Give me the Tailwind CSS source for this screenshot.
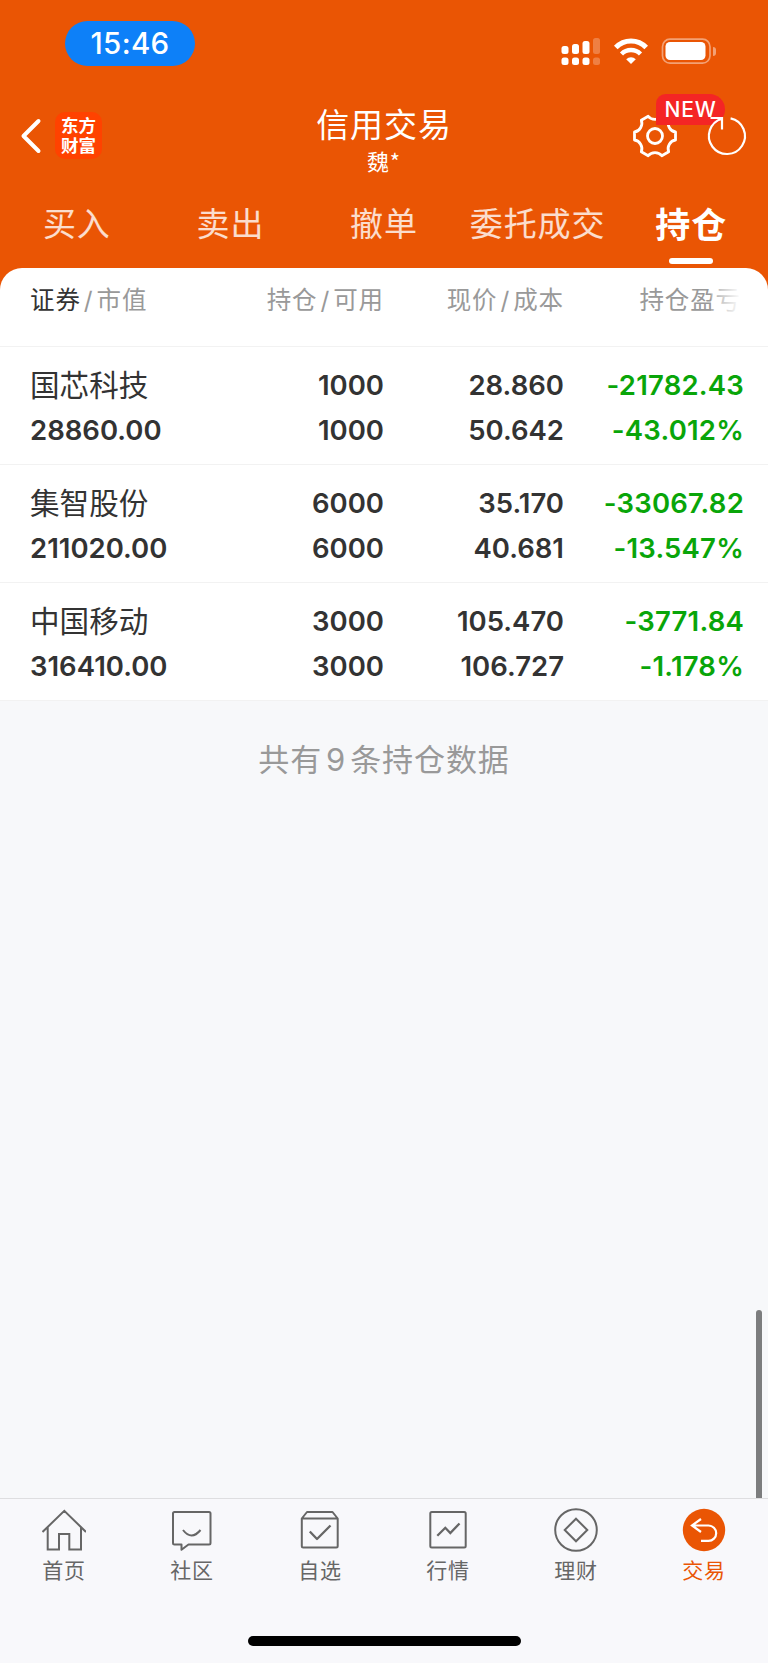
<!DOCTYPE html>
<html lang="zh-CN">
<head>
    <meta charset="UTF-8">
    <title>信用交易</title>
    <script src="https://cdn.jsdelivr.net/npm/@tailwindcss/browser@4"></script>
</head>
<body class="bg-[#f7f8fa] font-['Inter','Noto_Sans_CJK_SC',sans-serif] text-[#333]">
<div class="relative w-[768px] h-[1663px] flex flex-col overflow-hidden">

    <!-- Header -->
    <header class="bg-[#ea5504] h-[292px] shrink-0 text-white">
        <!-- Status bar -->
        <div class="h-[93px] pt-[21px] pl-[65px] pr-[51px] flex justify-between items-start">
            <div class="w-[130px] h-[45px] rounded-full bg-[#0d80f8] flex items-center justify-center pt-px text-[29.500px] font-medium tracking-[0.3px] leading-none">15:46</div>
            <svg class="mt-[15px] mr-[5px]" width="156" height="32" viewBox="0 0 156 32" fill="#fff">
                <rect x="5.5" y="10" width="7" height="8" rx="2.5"/>
                <rect x="16" y="8" width="7" height="10" rx="2.5"/>
                <rect x="26.5" y="5" width="7" height="13" rx="2.5"/>
                <rect x="37" y="2" width="7" height="16" rx="2.5" opacity=".25"/>
                <rect x="5.5" y="21.5" width="7" height="7.5" rx="2.5"/>
                <rect x="16" y="21.5" width="7" height="7.5" rx="2.5"/>
                <rect x="26.5" y="21.5" width="7" height="7.5" rx="2.5"/>
                <rect x="37" y="21.5" width="7" height="7.5" rx="2.5" opacity=".25"/>
                <path d="M59.800 11.500a21 21 0 0 1 30.400 0" fill="none" stroke="#fff" stroke-width="5"/>
                <path d="M65.500 18a13.500 13.500 0 0 1 19 0" fill="none" stroke="#fff" stroke-width="4.5"/>
                <path d="M75 28l-4.800-4.800a7 7 0 0 1 9.600 0z"/>
                <rect x="106.500" y="3.200" width="47.500" height="24" rx="7.5" fill="none" stroke="#fff" stroke-width="1.7" opacity=".45"/>
                <rect x="109.500" y="6" width="40" height="18" rx="4.5"/>
            </svg>
            <div class="absolute left-[713px] top-[47px] w-[3px] h-[9px] rounded-r-full bg-white/45"></div>
        </div>

        <!-- Title row -->
        <div class="relative h-[87px] flex justify-between">
            <div class="flex pt-[19px] pl-[20px]">
                <svg class="mt-[6px]" width="22" height="36" viewBox="0 0 22 36" fill="none" stroke="#fff" stroke-width="4" stroke-linecap="round" stroke-linejoin="round"><path d="M18.500 3L3.500 18l15 15"/></svg>
                <div class="ml-[13px] w-[47px] h-[47px] rounded-[10px] bg-[#ff4200] text-[17.500px] leading-[19.500px] font-bold text-center pt-[4px]">东方<br>财富</div>
            </div>
            <div class="absolute left-0 w-full top-[6px] text-center">
                <div class="text-[33px] leading-[48px] tracking-[0.9px] font-['Noto_Sans_CJK_SC',sans-serif] font-normal">信用交易</div>
                <div class="text-[22px] leading-[24px] mt-px tracking-[0.9px] font-['Noto_Sans_CJK_SC',sans-serif]">魏*</div>
            </div>
            <div class="relative w-[148px]">
                <svg class="absolute left-[12px] top-[20px]" width="46" height="46" viewBox="-23 -23 46 46" fill="none" stroke="#fff" stroke-width="2.8" stroke-linejoin="round">
                    <path d="M20.500-4V4C15.200 4.700 11.700 10.800 13.700 15.750L6.800 19.750C3.500 15.500-3.500 15.500-6.800 19.750L-13.700 15.750C-11.700 10.800-15.200 4.700-20.500 4V-4C-15.200-4.700-11.700-10.800-13.700-15.750L-6.800-19.750C-3.500-15.500 3.500-15.500 6.800-19.750L13.700-15.750C11.700-10.800 15.200-4.700 20.500-4z"/>
                    <circle r="7.5"/>
                </svg>
                <div class="absolute left-[36px] top-[1px] w-[69px] h-[31px] rounded-l-[10px] rounded-r-[16px] rounded-bl-none bg-[#f42525] text-[21px] leading-[31px] font-medium text-center tracking-[0.8px]">NEW</div>
                <svg class="absolute left-[84px] top-[20px]" width="46" height="46" viewBox="-23 -23 46 46" fill="none" stroke="#fff" stroke-width="2.2">
                    <path d="M3.600-17.600A18 18 0 1 1-5-17.300M-16.500-18H-5V-6.500"/>
                </svg>
            </div>
        </div>

        <!-- Trade tabs -->
        <nav class="grid grid-cols-5 h-[88px] pt-[20px] text-center text-[33px] leading-[48px] tracking-[0.9px] font-normal text-white/80 whitespace-nowrap">
            <a>买入</a>
            <a>卖出</a>
            <a>撤单</a>
            <a>委托成交</a>
            <a class="text-white font-bold text-[35px] flex flex-col items-center"><span class="pt-px">持仓</span><span class="w-[44px] h-[6px] mt-[9px] rounded-full bg-white"></span></a>
        </nav>
    </header>

    <!-- Holdings -->
    <main class="relative -mt-[24px] bg-white rounded-t-[22px] shrink-0">
        <div class="h-[79px] pt-[14px] pl-[30px] pr-[27px] grid grid-cols-[174px_180px_180px_1fr] text-right text-[24.500px] leading-[36px] tracking-[0.9px] text-[#999] font-normal border-b border-[#f2f2f2] whitespace-nowrap">
            <div class="text-left"><span class="text-[#333]">证券</span><span class="mx-[3px]">/</span>市值</div>
            <div>持仓<span class="mx-[3px]">/</span>可用</div>
            <div>现价<span class="mx-[3px]">/</span>成本</div>
            <div class="relative">持仓盈亏<span class="absolute right-0 top-0 w-[30px] h-full bg-linear-to-r from-white/20 to-white"></span></div>
        </div>

        <div class="h-[118px] pt-[16px] pl-[30px] pr-[24px] grid grid-cols-[174px_180px_180px_1fr] grid-rows-[45px_45px] text-right text-[27.500px] leading-[45px] font-semibold border-b border-[#f2f2f2]">
            <div class="text-left text-[29.600px] font-normal">国芯科技</div>
            <div>1000</div>
            <div>28.860</div>
            <div class="text-[#09a509] tracking-[0.2px]">-21782.43</div>
            <div class="text-left">28860.00</div>
            <div>1000</div>
            <div>50.642</div>
            <div class="text-[#09a509] tracking-[0.2px]">-43.012%</div>
        </div>

        <div class="h-[118px] pt-[16px] pl-[30px] pr-[24px] grid grid-cols-[174px_180px_180px_1fr] grid-rows-[45px_45px] text-right text-[27.500px] leading-[45px] font-semibold border-b border-[#f2f2f2]">
            <div class="text-left text-[29.600px] font-normal">集智股份</div>
            <div>6000</div>
            <div>35.170</div>
            <div class="text-[#09a509] tracking-[0.2px]">-33067.82</div>
            <div class="text-left">211020.00</div>
            <div>6000</div>
            <div>40.681</div>
            <div class="text-[#09a509] tracking-[0.2px]">-13.547%</div>
        </div>

        <div class="h-[118px] pt-[16px] pl-[30px] pr-[24px] grid grid-cols-[174px_180px_180px_1fr] grid-rows-[45px_45px] text-right text-[27.500px] leading-[45px] font-semibold border-b border-[#f2f2f2]">
            <div class="text-left text-[29.600px] font-normal">中国移动</div>
            <div>3000</div>
            <div>105.470</div>
            <div class="text-[#09a509] tracking-[0.2px]">-3771.84</div>
            <div class="text-left">316410.00</div>
            <div>3000</div>
            <div>106.727</div>
            <div class="text-[#09a509] tracking-[0.2px]">-1.178%</div>
        </div>
    </main>

    <p class="pt-[35px] text-center text-[31px] leading-[48px] tracking-[0.9px] font-normal text-[#999]">共有<span class="mx-[4px]">9</span>条持仓数据</p>

    <!-- Scrollbar -->
    <div class="absolute left-[756px] top-[1310px] w-[6px] h-[188px] rounded-t-full bg-[#7c7d7e]"></div>

    <!-- Bottom bar -->
    <footer class="mt-auto h-[165px] shrink-0 bg-[#f8f8fb] border-t border-[#dedee0] flex flex-col items-center">
        <nav class="grid grid-cols-6 w-full pt-[9px] text-[21px] leading-[30px] tracking-[0.7px] text-[#666] font-normal">
            <a class="flex flex-col items-center gap-[4px]">
                <svg width="44" height="44" viewBox="0 0 44 44" fill="none" stroke="#666" stroke-width="2"><path d="M.5 24L22.300 2.800L44 24M5.700 19.500V41.500H17V26H27.300V41.500H39V19.500"/></svg>
                首页
            </a>
            <a class="flex flex-col items-center gap-[4px]">
                <svg width="44" height="44" viewBox="0.500 0 44 44" fill="none" stroke="#666" stroke-width="2" stroke-linejoin="round"><path d="M5 4H39.500Q41 4 41 5.500V35Q41 36.500 39.500 36.500H19L12 41.800V36.500H5Q3.500 36.500 3.500 35V5.500Q3.500 4 5 4zM13.500 22Q22 33 31 22"/></svg>
                社区
            </a>
            <a class="flex flex-col items-center gap-[4px]">
                <svg width="44" height="44" viewBox="0 0 44 44" fill="none" stroke="#666" stroke-width="2" stroke-linejoin="round"><path d="M3.800 10.500L9 4H34.500L39.700 10.500V38Q39.700 39.500 38.200 39.500H5.300Q3.800 39.500 3.800 38V10.500H39.700"/><path d="M11.800 23.500L19 31L32.500 17.500" stroke-width="2.3"/></svg>
                自选
            </a>
            <a class="flex flex-col items-center gap-[4px]">
                <svg width="44" height="44" viewBox="0 0 44 44" fill="none" stroke="#666" stroke-width="2"><rect x="4.300" y="4" width="35.400" height="35.500" rx="1.5"/><path d="M11.300 27.800L19.300 19.800L24.300 25L33.500 15.500" stroke-width="2.3"/></svg>
                行情
            </a>
            <a class="flex flex-col items-center gap-[4px]">
                <svg width="44" height="44" viewBox="0 0 44 44" fill="none" stroke="#666" stroke-width="2"><circle cx="22" cy="22" r="20.800"/><path d="M22 10.700L33.300 22L22 33.300L10.700 22z"/></svg>
                理财
            </a>
            <a class="flex flex-col items-center gap-[4px] text-[#ea5504]">
                <svg width="44" height="44" viewBox="0 0 44 44" fill="none" stroke="#fff" stroke-width="2.2"><circle cx="22" cy="22" r="21.200" fill="#ea5504" stroke="none"/><path d="M19 11L10 17.500L19 24M10 17.500H26.500A7.700 7.700 0 0 1 26.500 32.900H19"/></svg>
                交易
            </a>
        </nav>
        <div class="mt-[50px] w-[273px] h-[10px] rounded-full bg-black"></div>
    </footer>

</div>
</body>
</html>
